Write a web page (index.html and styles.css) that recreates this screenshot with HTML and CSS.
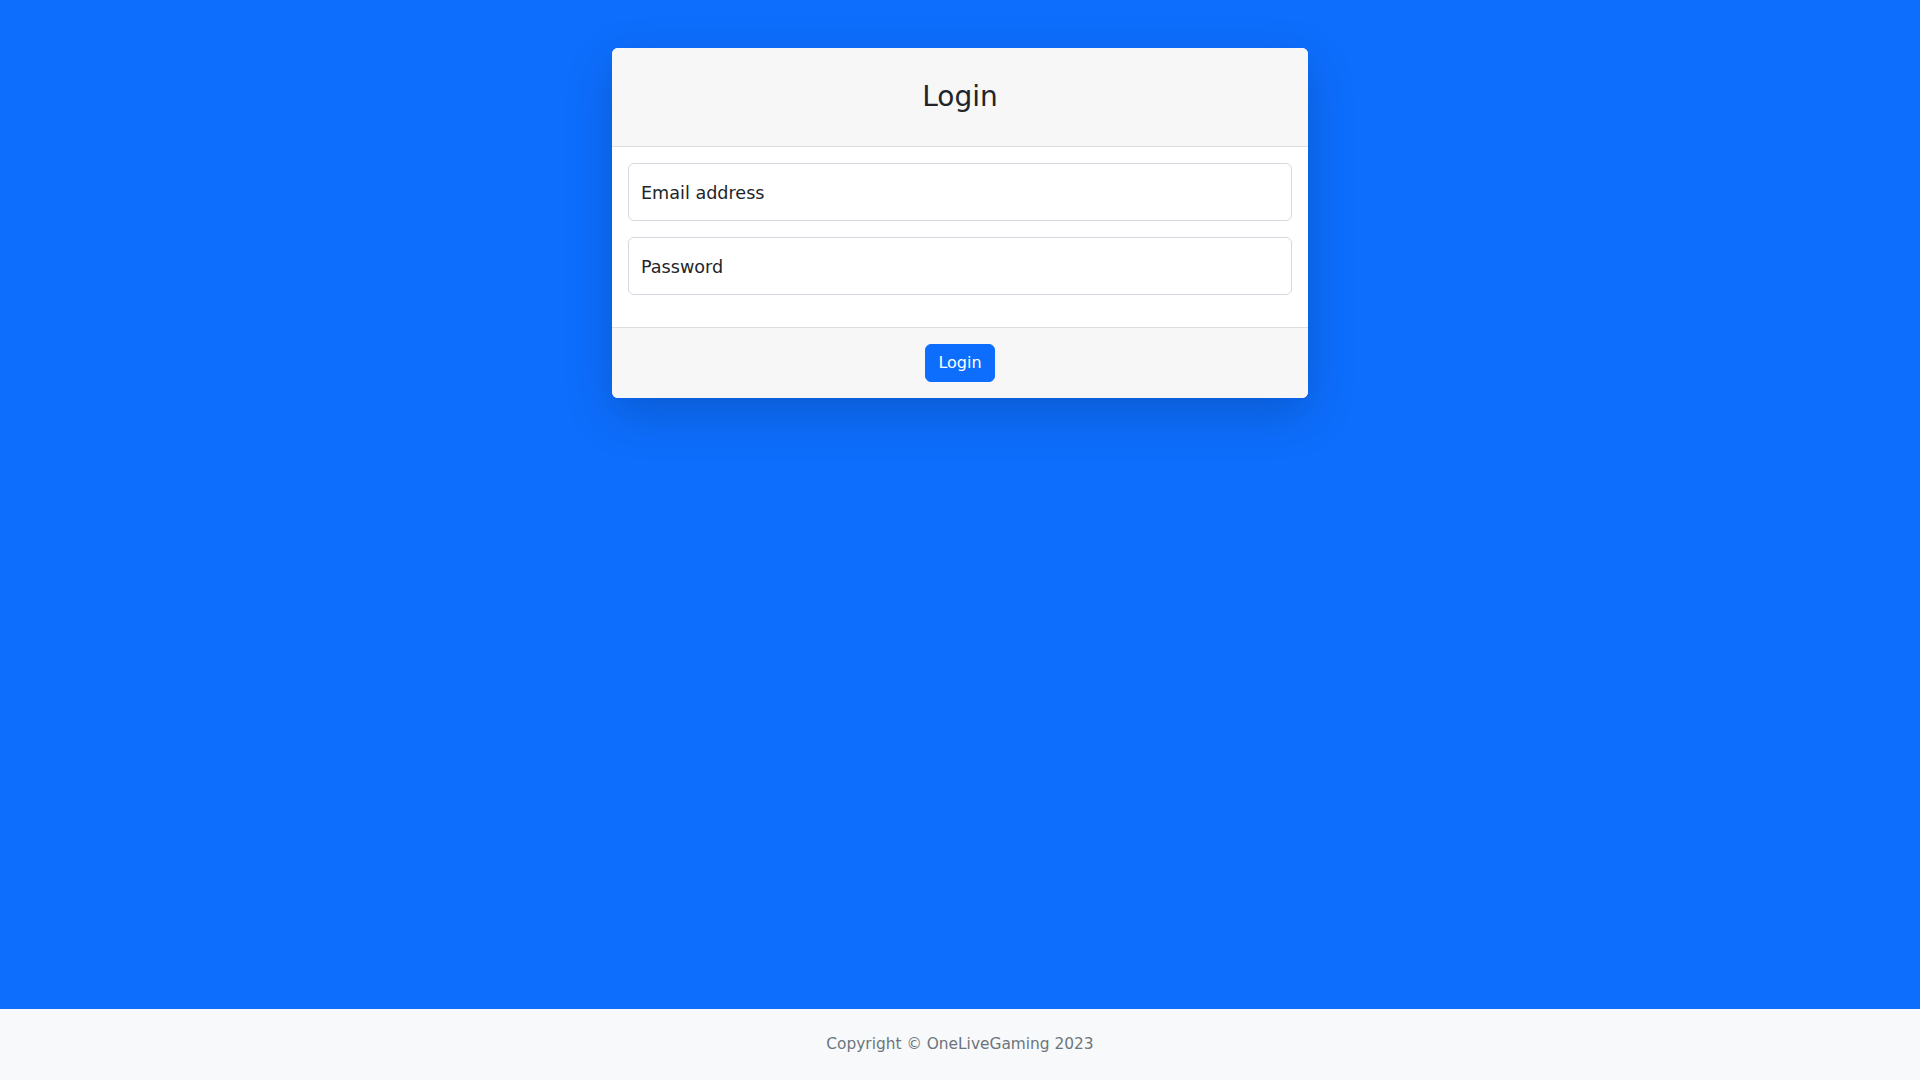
FILE: index.html
```html
<!DOCTYPE html>
<html lang="en">
<head>
<meta charset="utf-8">
<title>Login</title>
<link rel="stylesheet" href="styles.css">
</head>
<body>
<div class="layout">
  <main class="main">
    <div class="card">
      <div class="card-header">
        <h3 class="title">Login</h3>
      </div>
      <div class="card-body">
        <form class="form">
          <div class="floating">
            <input class="control" type="email" id="email" placeholder=" ">
            <label class="label" for="email">Email address</label>
          </div>
          <div class="floating">
            <input class="control" type="password" id="password" placeholder=" ">
            <label class="label" for="password">Password</label>
          </div>
        </form>
      </div>
      <div class="card-footer">
        <button class="btn" type="button">Login</button>
      </div>
    </div>
  </main>
  <footer class="footer">
    <div class="muted">Copyright &copy; OneLiveGaming 2023</div>
  </footer>
</div>
</body>
</html>
```

FILE: styles.css
```css
* { box-sizing: border-box; }
html, body { margin: 0; padding: 0; height: 100%; }
body {
  font-family: "DejaVu Sans", "Noto Sans", sans-serif;
  font-size: 17.6px;
  line-height: 1.5;
  color: #212529;
  background: #0d6efd;
}
.layout {
  min-height: 100vh;
  display: flex;
  flex-direction: column;
}
.main {
  flex: 1 0 auto;
  display: flex;
  justify-content: center;
  align-items: flex-start;
  padding-top: 48px;
}
.card {
  width: 696px;
  background: #fff;
  border-radius: 6px;
  box-shadow: 0 16px 48px rgba(0, 0, 0, 0.175);
  overflow: hidden;
}
.card-header {
  background: #f7f7f7;
  border-bottom: 1px solid #dedede;
  padding: 8px 16px;
}
.title {
  margin: 24px 0;
  text-align: center;
  font-size: 28px;
  font-weight: 400;
  line-height: 33.6px;
}
.card-body { padding: 16px 16px 0; }
.form { display: flex; flex-direction: column; gap: 16px; padding-bottom: 32px; }
.floating { position: relative; }
.control {
  display: block;
  width: 100%;
  height: 58px;
  padding: 16px 12px;
  font: inherit;
  color: #212529;
  background: #fff;
  border: 1px solid #d3d8de;
  border-radius: 6px;
  outline: none;
}
.label {
  position: absolute;
  top: 0;
  left: 0;
  height: 100%;
  padding: 17px 13px 0;
  line-height: 1.5;
  color: #212529;
  pointer-events: none;
  white-space: nowrap;
}
.card-footer {
  background: #f7f7f7;
  border-top: 1px solid #dedede;
  padding: 16px;
  display: flex;
  justify-content: center;
}
.btn {
  font: inherit;
  font-size: 16px;
  line-height: 24px;
  padding: 6px 12px;
  color: #fff;
  background: #0d6efd;
  border: 1px solid #0d6efd;
  border-radius: 6px;
}
.footer {
  background: #f8f9fa;
  height: 71px;
  display: flex;
  align-items: center;
  justify-content: center;
}
.muted {
  font-size: 15.4px;
  color: #6c757d;
}
```
